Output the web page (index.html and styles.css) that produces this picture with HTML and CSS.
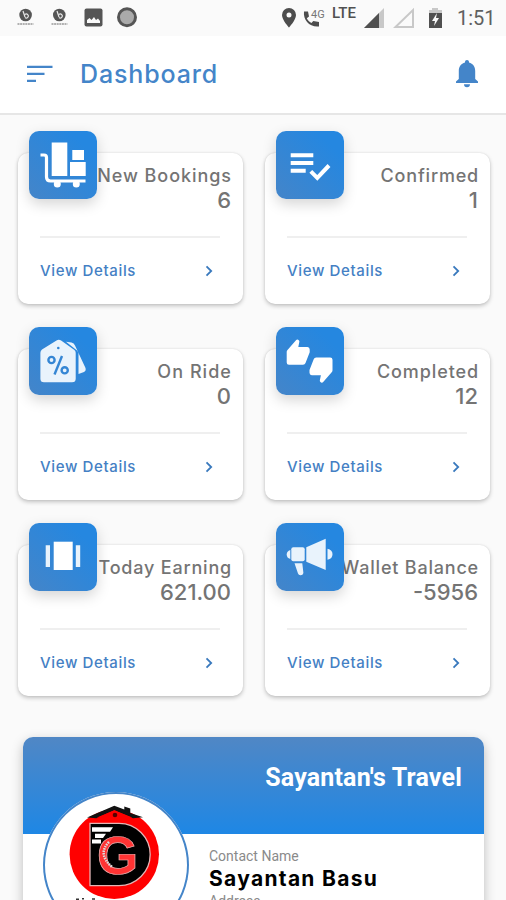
FILE: index.html
```html
<!DOCTYPE html>
<html lang="en">
<head>
<meta charset="utf-8">
<title>Dashboard</title>
<link rel="stylesheet" href="styles.css">
</head>
<body>
<div class="status">
  <svg class="notif" viewBox="0 0 150 36" width="150" height="36">
    <g fill="#555"><circle cx="25.600" cy="15" r="6.300"/><circle cx="59.300" cy="15" r="6.300"/></g>
    <g fill="none" stroke="#e8e8e8" stroke-width="1.200"><path d="M23 11l2 6M25 14.500a2 2 0 1 1 0 3M57 11l2 6M59 14.500a2 2 0 1 1 0 3"/></g>
    <path d="M17.500 24h16M51.500 24h16" stroke="#999" stroke-width="1.400" stroke-dasharray="2 .6"/>
    <rect x="84.500" y="8.500" width="18" height="18" rx="2" fill="#555"/>
    <path d="M87 23v-3l2.500-2 2 2 2.500-3 2 3 2-1.500 2 2.500v2z" fill="#fafafa"/>
    <circle cx="127" cy="17.300" r="8.500" fill="#aaa" stroke="#555" stroke-width="3"/>
  </svg>
  <div class="system">
    <svg viewBox="0 0 45 36" width="45" height="36">
      <path fill="#4d4d4d" fill-rule="evenodd" d="M9 8a7 7 0 0 0-7 7c0 5 7 12.500 7 12.500S16 20 16 15a7 7 0 0 0-7-7zm0 4.500a2.500 2.500 0 1 1 0 5 2.500 2.500 0 0 1 0-5z"/>
      <path fill="#4d4d4d" d="M24 11.500h4l1 5-2.200 1.800c1 2 2.500 3.600 4.600 4.700l1.900-2.100 5.700 1.200v4.400C29.500 27.500 23 20 24 11.500z"/>
      <text x="31" y="17.500" class="four-g">4G</text>
    </svg>
    <span class="lte">LTE</span>
    <svg viewBox="0 0 90 36" width="90" height="36">
      <path d="M6 28L26 8v20z" fill="#c8c8c8"/><path d="M6 28L21 13v15z" fill="#505050"/>
      <path d="M37.500 27L55 10v17z" fill="none" stroke="#c8c8c8" stroke-width="2"/>
      <path d="M71 10h3V8h6v2h4v4H71z" fill="#c8c8c8"/><path d="M71 13h13v15H71z" fill="#505050"/>
      <path d="M79 13l-5 8h3l-1 5 5-8h-3z" fill="#fafafa"/>
    </svg>
    <span class="clock">1:51</span>
  </div>
</div>
<header class="appbar">
  <svg viewBox="0 0 26 18" width="26" height="18"><path d="M0 1.800h25.500M0 8.800h17.500M0 15.800h9" stroke="#4485c9" stroke-width="2.300"/></svg>
  <h1>Dashboard</h1>
  <svg class="bell" viewBox="0 0 24 30" width="24" height="30"><path fill="#4485c9" d="M12 1c1.200 0 2 .8 2 2v.6c4 1 6.200 4.200 6.200 8.400v8L23 22.500V24H1v-1.500L3.800 20v-8c0-4.200 2.200-7.400 6.200-8.400V3c0-1.200.8-2 2-2zM9 25.300h6a3 3 0 0 1-6 0z"/></svg>
</header>
<main>
  <div class="grid">
    <section class="card">
      <div class="tile"><svg viewBox="0 0 68 68"><path d="M11.500 24h3.500q2.500 0 2.500 2.500V46q0 4 4 4h35" fill="none" stroke="#fff" stroke-width="3.200"/><path fill="#fff" d="M22.700 11.500h15.600V45H22.700zM43.300 19H55v10H43.300zM41 31h15.700v14H41z"/><circle cx="28.300" cy="53" r="3.500" fill="#fff"/><circle cx="47.300" cy="53" r="3.500" fill="#fff"/></svg></div>
      <h2 class="w1">New Bookings</h2><p class="value">6</p>
      <a class="more"><span>View Details</span><svg class="chev" viewBox="0 0 8 12"><path d="M1.500 1.300L6.200 6 1.500 10.700"/></svg></a>
    </section>
    <section class="card">
      <div class="tile"><svg viewBox="0 0 68 68"><path fill="#fff" d="M14.700 22.300h22.600v4H14.700zM14.700 30h22.600v4H14.700zM14.700 37.700h15v4h-15z"/><path d="M34.800 40.300l6.500 6.500L53 34.500" fill="none" stroke="#fff" stroke-width="4"/></svg></div>
      <h2 class="w2">Confirmed</h2><p class="value">1</p>
      <a class="more"><span>View Details</span><svg class="chev" viewBox="0 0 8 12"><path d="M1.500 1.300L6.200 6 1.500 10.700"/></svg></a>
    </section>
    <section class="card">
      <div class="tile"><svg viewBox="0 0 68 68"><path fill="#e9f3fc" d="M37 14.700l5.500.8q2.500.4 3.500 3L56.500 41q.8 2.800-1.500 4l-5.500 2V27q0-2-1.500-3.500z"/><path fill="#e9f3fc" d="M27.500 13.500q2.300-1.700 4.600 0l13 9.200q1.600 1.200 1.600 3v26q0 3.600-3.600 3.600H15q-3.600 0-3.600-3.600v-26q0-2 1.600-3.200z"/><circle cx="29.300" cy="21" r="1.300" fill="#3586d4"/><g fill="none" stroke="#3586d4" stroke-width="2.400"><circle cx="22.500" cy="33" r="3.100"/><circle cx="35.700" cy="43.300" r="3.100"/><path d="M33 29l-7.500 18.500"/></g></svg></div>
      <h2 class="w3">On Ride</h2><p class="value">0</p>
      <a class="more"><span>View Details</span><svg class="chev" viewBox="0 0 8 12"><path d="M1.500 1.300L6.200 6 1.500 10.700"/></svg></a>
    </section>
    <section class="card">
      <div class="tile"><svg viewBox="0 0 68 68"><g fill="#fff"><path id="thumb" d="M11.300 23.300L20 13.200q1.300-1.700 3 .2.600.8.300 1.700L22.300 20h9.200q2.200.2 2.200 2.400v2.800L29.500 36q-.6 1.700-2.500 1.700H13q-2.300 0-2.300-2.300V25q0-1 .6-1.700z"/><use href="#thumb" transform="rotate(180 33.600 34.100)"/></g></svg></div>
      <h2 class="w4">Completed</h2><p class="value">12</p>
      <a class="more"><span>View Details</span><svg class="chev" viewBox="0 0 8 12"><path d="M1.500 1.300L6.200 6 1.500 10.700"/></svg></a>
    </section>
    <section class="card">
      <div class="tile"><svg viewBox="0 0 68 68"><path fill="#fff" d="M24.700 18.700h19V47h-19z"/><path fill="#e9f3fc" d="M16.700 22.300H21V44h-4.300zM46.800 22.300h4.400V44h-4.400z"/></svg></div>
      <h2 class="w5">Today Earning</h2><p class="value">621.00</p>
      <a class="more"><span>View Details</span><svg class="chev" viewBox="0 0 8 12"><path d="M1.500 1.300L6.200 6 1.500 10.700"/></svg></a>
    </section>
    <section class="card">
      <div class="tile"><svg viewBox="0 0 68 68"><g fill="#e9f3fc"><path d="M14.300 27v9q-3.600-1-3.600-4.500T14.300 27z"/><rect x="15.300" y="24.300" width="13.400" height="14" rx="2"/><path d="M30.300 24.300l19.400-8.600V47l-19.400-8.300zM51.500 25.700q5 1 5 5.500t-5 5.500zM18.500 40.300h7.800L27.400 50q-.5 2.300-3 2.200-1.800 0-2.400-1.700z"/></g></svg></div>
      <h2 class="w6">Wallet Balance</h2><p class="value">-5956</p>
      <a class="more"><span>View Details</span><svg class="chev" viewBox="0 0 8 12"><path d="M1.500 1.300L6.200 6 1.500 10.700"/></svg></a>
    </section>
  </div>
  <section class="profile">
    <div class="banner">Sayantan's Travel</div>
    <div class="contact">
      <p class="label">Contact Name</p>
      <p class="name">Sayantan Basu</p>
      <p class="label address">Address</p>
    </div>
    <div class="avatar">
      <svg viewBox="0 0 146 146" width="146" height="146">
        <circle cx="71.300" cy="62.300" r="44.700" fill="red"/>
        <path d="M44 25.500l27.300-11.700 10 3.700v-3l6 2v4.500L100 25.300l-10 1-18.700-8-18 8z" fill="#111"/>
        <path d="M54 25.500l17.300-7.300 18 7.300z" fill="red"/>
        <circle cx="72" cy="23" r="2.300" fill="#500"/>
        <path d="M47 31.300h29a31.200 31.200 0 0 1 0 62.400H47z" fill="#000" stroke="#e3b5b5" stroke-width="1.300"/>
        <path d="M49 35.300h21l-3 4.500H49zM52 41.700h11l-3 4.300h-8zM49 47.500h9v4h-9z" fill="#fff"/>
        <text x="74.500" y="81.500" text-anchor="middle" class="logo-g">G</text>
        <path d="M66 50q-12 12 3 25" fill="none" stroke="#ddd" stroke-width="2.500" stroke-dasharray="1.500 1"/>
        <path d="M33 107.300h3M39 106.800h2M49 107h3" stroke="#333" stroke-width="1.400"/>
      </svg>
    </div>
  </section>
</main>
</body>
</html>
```

FILE: styles.css
```css
* { box-sizing: border-box; }
body {
  margin: 0;
  height: 900px;
  overflow: hidden;
  background: #fafafa;
  font-family: Inter, sans-serif;
  color: #747474;
}
h1, h2, p { margin: 0; font-weight: 500; }
svg { display: block; flex: none; }

.status { height: 36px; display: flex; justify-content: space-between; }
.system { display: flex; width: 226px; }
.four-g { font: 11px Roboto, sans-serif; fill: #777; }
.lte { width: 33px; padding: 5px 0 0 7px; font: 500 15px/16px Roboto, sans-serif; color: #505050; }
.clock { padding-left: 9px; font: 20px/36px Roboto, sans-serif; color: #606060; white-space: nowrap; }

.appbar {
  height: 79px;
  padding: 0 27px 2px;
  display: flex;
  align-items: center;
  background: #fff;
  border-bottom: 2px solid #e6e6e6;
}
.appbar h1 { margin-left: 27px; font-size: 25px; line-height: 30px; color: #4485c9; letter-spacing: 0.85px; }
.bell { margin-left: auto; }

.grid {
  display: grid;
  grid-template-columns: 225px 225px;
  gap: 45px 22px;
  padding: 38px 16px 0 18px;
}
.card {
  position: relative;
  height: 151px;
  padding: 12px 12px 0 22px;
  border-radius: 10px;
  background: #fff;
  box-shadow: 0 2px 4px rgba(0,0,0,.22), 0 0 2px rgba(0,0,0,.1);
  text-align: right;
}
.card h2 { margin: 0 -1px 0 -12px; font-size: 18px; line-height: 22px; white-space: nowrap; letter-spacing: .8px; }
.card .w1 { letter-spacing: .95px; }
.card .w3 { letter-spacing: 1.05px; }
.card .w4 { letter-spacing: .9px; }
.value { font-size: 22px; line-height: 26px; }
.tile {
  position: absolute;
  left: 10.5px;
  top: -22px;
  width: 68px;
  height: 68px;
  border-radius: 10px;
  background: linear-gradient(45deg, #4485c9, #2587e0 80%);
  box-shadow: 0 5px 14px rgba(0,0,0,.17);
}
.card:nth-child(even) .tile { left: 11px; }
.more {
  display: flex;
  align-items: center;
  justify-content: space-between;
  height: 67px;
  margin: 23px 11px 0 0;
  padding-right: 7px;
  border-top: 2px solid #efefef;
  font-size: 15px;
  font-weight: 500;
  letter-spacing: .64px;
  color: #4480c4;
}
.chev { width: 8px; height: 12px; fill: none; stroke: #3979bd; stroke-width: 1.8; }

.profile {
  position: relative;
  margin: 41px 22px 0 23px;
  height: 240px;
  border-radius: 10px;
  background: #fff;
  box-shadow: 0 4px 12px rgba(0,0,0,.25);
}
.banner {
  height: 97px;
  padding: 24px 22px 0 0;
  border-radius: 10px 10px 0 0;
  background: linear-gradient(#5087c5, #1e87e5);
  color: #fff;
  text-align: right;
  font: bold 25px/34px Roboto, sans-serif;
  letter-spacing: .18px;
}
.contact { padding: 13px 0 0 186px; }
.label { font: 14px/18px Roboto, sans-serif; color: #8a8a8a; }
.name { font-size: 21px; line-height: 27px; font-weight: 700; color: #000; letter-spacing: 1.3px; }
.avatar {
  position: absolute;
  left: 20px;
  top: 55px;
  width: 146px;
  height: 146px;
  border-radius: 50%;
  background: #fff;
  box-shadow: inset 0 0 0 2px #4485c9;
}
.logo-g { font: bold 53px "Liberation Sans", sans-serif; fill: #f33; stroke: #f5b5b5; stroke-width: .7px; }
```
